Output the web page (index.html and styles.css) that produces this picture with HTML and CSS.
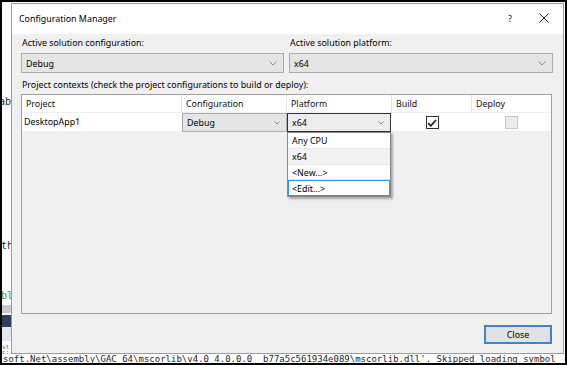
FILE: index.html
```html
<!DOCTYPE html>
<html>
<head>
<meta charset="utf-8">
<link rel="stylesheet" href="styles.css">
</head>
<body>
<div class="screen">
  <div class="main">
    <div class="editor-left">
      <span class="snip s-ab">ab</span>
      <span class="snip s-th">th</span>
      <span class="snip s-bl">bl</span>
      <div class="bar-gray"></div>
      <div class="bar-navy"></div>
      <div class="bar-light"></div>
      <span class="snip s-st">st<br>c:</span>
    </div>
    <div class="dialog">
      <div class="titlebar">
        <span class="title">Configuration Manager</span>
        <span class="tb-help">?</span>
        <span class="tb-close">
          <svg width="10" height="10" viewBox="0 0 10 10"><path d="M0.5 0.5 L9.5 9.5 M9.5 0.5 L0.5 9.5" stroke="#1a1a1a" stroke-width="1" fill="none"/></svg>
        </span>
      </div>
      <div class="body">
        <div class="top-fields">
          <div class="field">
            <div class="label">Active solution configuration:</div>
            <div class="combo"><span>Debug</span><svg class="chev" width="8" height="5" viewBox="0 0 8 5"><path d="M0.5 0.5 L4 4 L7.5 0.5" stroke="#8a8a8a" fill="none"/></svg></div>
          </div>
          <div class="field">
            <div class="label">Active solution platform:</div>
            <div class="combo"><span>x64</span><svg class="chev" width="8" height="5" viewBox="0 0 8 5"><path d="M0.5 0.5 L4 4 L7.5 0.5" stroke="#8a8a8a" fill="none"/></svg></div>
          </div>
        </div>
        <div class="label ctx">Project contexts (check the project configurations to build or deploy):</div>
        <div class="grid">
          <div class="row head">
            <div class="cell">Project</div>
            <div class="cell">Configuration</div>
            <div class="cell">Platform</div>
            <div class="cell">Build</div>
            <div class="cell">Deploy</div>
          </div>
          <div class="row data">
            <div class="cell">DesktopApp1</div>
            <div class="cell c-combo">
              <div class="mini-combo"><span>Debug</span><svg class="chev" width="6" height="4" viewBox="0 0 6 4"><path d="M0.5 0.5 L3 3 L5.5 0.5" stroke="#8a8a8a" fill="none"/></svg></div>
            </div>
            <div class="cell c-combo">
              <div class="mini-combo focus"><span>x64</span><svg class="chev" width="6" height="4" viewBox="0 0 6 4"><path d="M0.5 0.5 L3 3 L5.5 0.5" stroke="#8a8a8a" fill="none"/></svg></div>
              <div class="dropdown">
                <div class="opt">Any CPU</div>
                <div class="opt sel">x64</div>
                <div class="opt">&lt;New...&gt;</div>
                <div class="opt hot">&lt;Edit...&gt;</div>
              </div>
            </div>
            <div class="cell c-check">
              <span class="check on"><svg width="10" height="8" viewBox="0 0 10 8"><path d="M1 4 L3.8 6.8 L9 1" stroke="#1a1a1a" stroke-width="1.6" fill="none"/></svg></span>
            </div>
            <div class="cell c-check">
              <span class="check off"></span>
            </div>
          </div>
        </div>
        <div class="footer">
          <button class="btn">Close</button>
        </div>
      </div>
    </div>
    <div class="edge-right"></div>
  </div>
  <div class="output-line">soft.Net\assembly\GAC_64\mscorlib\v4.0_4.0.0.0__b77a5c561934e089\mscorlib.dll'. Skipped loading symbol</div>
</div>
</body>
</html>
```
FILE: styles.css
```css
* { box-sizing: border-box; }
html, body { margin: 0; padding: 0; background: #fff; }
.screen {
  width: 567px; height: 365px;
  border: 2px solid #000;
  display: flex; flex-direction: column;
  overflow: hidden;
  font-family: "Noto Sans", "Open Sans", sans-serif;
  font-size: 8.9px; color: #111;
  background: #fff;
}
.main { display: flex; height: 351px; margin-top: 1px; flex: none; }
.editor-left {
  width: 9px; flex: none; display: flex; flex-direction: column;
  font-family: "DejaVu Sans Mono", monospace; font-size: 10px; line-height: 10px;
  overflow: hidden; background: #fff;
}
.snip { display: block; white-space: nowrap; color: #1e1e1e; }
.s-ab { margin-top: 94px; margin-left: -3px; }
.s-th { margin-top: 134px; margin-left: -1px; }
.s-bl { margin-top: 40px; margin-left: -1px; color: #2e9a3a; }
.bar-gray { height: 8px; margin-top: 4px; background: #c9c9cf; flex: none; }
.bar-navy { height: 12px; margin-top: 2px; background: #2f3f5c; flex: none; }
.bar-light { height: 14px; background: #e3e6ee; flex: none; }
.s-st { font-size: 6px; line-height: 5px; margin-top: 3px; color: #555; }
.dialog {
  width: 553px; flex: none;
  border: 1px solid #6ea7dc;
  background: #f0f0f0;
  display: flex; flex-direction: column;
}
.edge-right { flex: 1; background: #fff; }
.titlebar {
  height: 30px; background: #fff; flex: none;
  display: flex; align-items: center; padding-left: 7px; padding-right: 14px;
  padding-bottom: 2px;
}
.title { flex: 1; color: #000; }
.tb-help { font-size: 9px; color: #222; margin-right: 27px; }
.tb-close { display: flex; align-items: center; }
.body { padding: 2px 11px 0 9px; display: flex; flex-direction: column; flex: 1; }
.top-fields { display: grid; grid-template-columns: 263px 264px; column-gap: 5px; }
.label { line-height: 14px; color: #000; padding-left: 1px; white-space: nowrap; }
.combo {
  margin-top: 3px; height: 20px;
  background: #e5e5e5; border: 1px solid #acacac;
  display: flex; align-items: center; justify-content: space-between;
  padding: 0 6px 0 4px; color: #000;
}
.ctx { margin-top: 5px; }
.grid {
  margin-top: 2px; height: 220px; flex: none;
  border: 1px solid #a0a0a0; background: #f0f0f0;
}
.row { display: grid; grid-template-columns: 160px 105px 105px 80px 79px; background: #fff; }
.head { height: 18px; border-bottom: 1px solid #f0f0f0; }
.head .cell { padding-left: 4px; line-height: 17px; border-right: 1px solid #e3e3e3; }
.head .cell:last-child { border-right: none; }
.data { height: 18px; }
.data .cell { line-height: 18px; padding-left: 2px; position: relative; color: #000; }
.c-combo { padding-left: 0 !important; }
.mini-combo {
  height: 19px; background: #e5e5e5; border: 1px solid #acacac;
  display: flex; align-items: center; justify-content: space-between;
  padding: 0 6px 0 4px; line-height: 17px;
}
.mini-combo.focus { border-color: #333; background: #ececec; margin-right: 1px; }
.dropdown {
  position: absolute; left: 0; top: 19px; width: 104px;
  background: #fff; border: 1px solid #828790;
  box-shadow: 2px 2px 2px rgba(0,0,0,0.3);
  z-index: 2;
}
.opt { height: 15.5px; line-height: 15px; padding-left: 4px; border-bottom: 1px solid #e8e8e8; }
.opt:first-child { height: 16px; }
.opt.sel { background: #f2f2f2; }
.opt.hot { border: 1px solid #2e9adf; padding-left: 3px; }
.c-check { display: flex; align-items: center; justify-content: center; padding-left: 0 !important; }
.check {
  width: 13px; height: 13px; display: flex; align-items: center; justify-content: center;
  border: 1px solid #333; background: #fff;
}
.check.off { border-color: #c8c8c8; background: #ececec; }
.footer { display: flex; justify-content: flex-end; margin-top: 11px; }
.btn {
  width: 68px; height: 19px;
  font-family: "Noto Sans", "Open Sans", sans-serif; font-size: 8.9px; color: #000;
  background: #e1e1e1; border: 2px solid #3c86d0; padding: 0; line-height: 14px;
}
.output-line {
  height: 9px; font-family: "DejaVu Sans Mono", monospace; font-size: 9px; line-height: 11px;
  white-space: nowrap; overflow: hidden; color: #1e1e1e; padding-left: 1px; flex: none;
}
```
